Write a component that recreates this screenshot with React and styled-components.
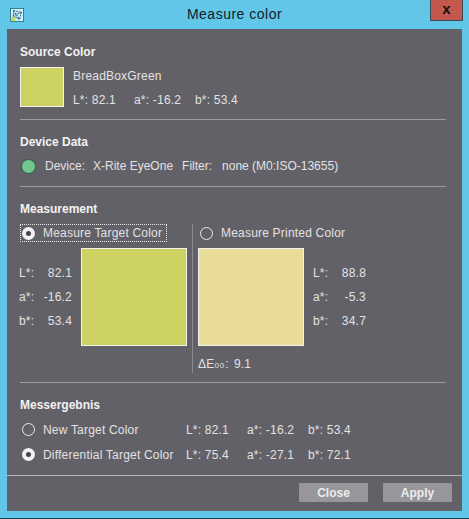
import styled, { createGlobalStyle } from "styled-components";

const GlobalStyle = createGlobalStyle`
  html, body {
    margin: 0;
    padding: 0;
    background: #62c6e8;
  }
  body {
    font-family: "Liberation Sans", Arial, sans-serif;
  }
`;

function Readout({ values }) {
  return (
    <LabRow>
      <span>L*: {values[0]}</span>
      <span>a*: {values[1]}</span>
      <span>b*: {values[2]}</span>
    </LabRow>
  );
}

function Radio({ checked }) {
  return <RadioCircle $checked={checked} />;
}

function LabColumn({ values }) {
  return (
    <LabStack>
      {["L*:", "a*:", "b*:"].map((label, i) => (
        <LabLine key={label}>
          <span>{label}</span>
          <span>{values[i]}</span>
        </LabLine>
      ))}
    </LabStack>
  );
}

export default function App() {
  return (
    <>
      <GlobalStyle />
      <Window>
        <TitleBar>
          <AppIcon viewBox="0 0 16 16">
            <rect x="0.5" y="0.5" width="15" height="15" fill="#d8eef2" stroke="#17788f" />
            <path d="M1 10h5v5H1z" fill="#c5d86a" />
            <path d="M4 3l9 2-2 8-7-4zM4 3l7 10M13 5L3 9" fill="none" stroke="#1c6f9a" strokeWidth="1.2" strokeDasharray="2 1" />
          </AppIcon>
          <Title>Measure color</Title>
          <CloseBox>x</CloseBox>
        </TitleBar>
        <Content>
          <Section $first>
            <Heading>Source Color</Heading>
            <SourceRow>
              <Swatch $color="#cdd263" $w={44} $h={40} />
              <SourceInfo>
                <span>BreadBoxGreen</span>
                <Readout values={["82.1", "-16.2", "53.4"]} />
              </SourceInfo>
            </SourceRow>
          </Section>
          <Divider />
          <Section>
            <Heading>Device Data</Heading>
            <DeviceRow>
              <StatusDot />
              <DeviceLabel>Device:</DeviceLabel>
              <span>X-Rite EyeOne</span>
              <FilterLabel>Filter:</FilterLabel>
              <span>none (M0:ISO-13655)</span>
            </DeviceRow>
          </Section>
          <Divider />
          <Section>
            <Heading>Measurement</Heading>
            <MeasureGrid>
              <MeasurePane>
                <FocusOption>
                  <Radio checked />
                  <span>Measure Target Color</span>
                </FocusOption>
                <TargetBody>
                  <LabColumn values={["82.1", "-16.2", "53.4"]} />
                  <Swatch $color="#cdd263" $w={106} $h={98} />
                </TargetBody>
              </MeasurePane>
              <PrintedPane>
                <PlainOption>
                  <Radio />
                  <span>Measure Printed Color</span>
                </PlainOption>
                <PrintedBody>
                  <Swatch $color="#e9dc97" $w={106} $h={98} />
                  <LabColumn values={["88.8", "-5.3", "34.7"]} />
                </PrintedBody>
                <DeltaRow>
                  <span>ΔE<Small>00</Small>:</span>
                  <span>9.1</span>
                </DeltaRow>
              </PrintedPane>
            </MeasureGrid>
          </Section>
          <Divider />
          <Section>
            <Heading>Messergebnis</Heading>
            <ResultGrid>
              <ResultOption>
                <Radio />
                <span>New Target Color</span>
              </ResultOption>
              <Readout values={["82.1", "-16.2", "53.4"]} />
              <ResultOption>
                <Radio checked />
                <span>Differential Target Color</span>
              </ResultOption>
              <Readout values={["75.4", "-27.1", "72.1"]} />
            </ResultGrid>
          </Section>
          <Footer>
            <DialogButton>Close</DialogButton>
            <DialogButton>Apply</DialogButton>
          </Footer>
        </Content>
      </Window>
    </>
  );
}

const Window = styled.div`
  width: 469px;
  height: 519px;
  box-sizing: border-box;
  background: #62c6e8;
  border-bottom: 1px solid #1d3c4c;
  display: flex;
  flex-direction: column;
  overflow: hidden;
`;

const TitleBar = styled.div`
  height: 29px;
  flex-shrink: 0;
  display: flex;
  align-items: flex-start;
  padding-left: 10px;
  padding-right: 6px;
`;

const AppIcon = styled.svg`
  width: 14px;
  height: 14px;
  margin-top: 8px;
  flex-shrink: 0;
`;

const Title = styled.div`
  flex: 1;
  text-align: center;
  font-size: 14px;
  letter-spacing: 0.5px;
  line-height: 29px;
  color: #10202a;
  padding-left: 15px;
`;

const CloseBox = styled.div`
  width: 33px;
  height: 21px;
  box-sizing: border-box;
  background: #c4584e;
  border: 1px solid #3c4a55;
  border-top: none;
  color: #111;
  font-size: 15px;
  font-weight: bold;
  line-height: 18px;
  text-align: center;
`;

const Content = styled.div`
  margin: 0 7px;
  height: 482px;
  box-sizing: border-box;
  background: #626168;
  color: #e2e2e2;
  font-size: 12px;
  letter-spacing: 0.2px;
  display: flex;
  flex-direction: column;
`;

const Section = styled.section`
  padding: ${(p) => (p.$first ? "15px" : "14px")} 13px 0;
`;

const Heading = styled.h2`
  margin: 1px 0 -1px;
  font-size: 12px;
  line-height: 15px;
  font-weight: bold;
  letter-spacing: 0;
  color: #f2f2f2;
`;

const Divider = styled.div`
  height: 1px;
  background: #9a9aa0;
  margin: 0 16px 0 13px;
`;

const SourceRow = styled.div`
  display: flex;
  gap: 9px;
  margin-top: 8px;
  margin-bottom: 11px;
`;

const Swatch = styled.div`
  width: ${(p) => p.$w}px;
  height: ${(p) => p.$h}px;
  box-sizing: border-box;
  flex-shrink: 0;
  background: ${(p) => p.$color};
  border: 1px solid #f2f2ee;
`;

const SourceInfo = styled.div`
  display: flex;
  flex-direction: column;
  gap: 8px;
  line-height: 16px;
  margin-top: 1px;
`;

const LabRow = styled.div`
  display: grid;
  grid-template-columns: 61px 61px auto;
  white-space: pre;
  line-height: 16px;
`;

const DeviceRow = styled.div`
  display: flex;
  align-items: center;
  height: 16px;
  margin-top: 9px;
  margin-bottom: 12px;
  letter-spacing: 0;
  padding-left: 1px;
`;

const StatusDot = styled.div`
  width: 15px;
  height: 15px;
  box-sizing: border-box;
  border-radius: 50%;
  background: #72c690;
  border: 1px solid #2e5a44;
  margin-right: 9px;
`;

const DeviceLabel = styled.span`
  margin-right: 8px;
`;

const FilterLabel = styled.span`
  margin: 0 10px 0 9px;
`;

const MeasureGrid = styled.div`
  display: grid;
  grid-template-columns: 172px 1fr;
  margin-top: 8px;
  margin-bottom: 9px;
`;

const MeasurePane = styled.div`
  display: flex;
  flex-direction: column;
`;

const PrintedPane = styled.div`
  display: flex;
  flex-direction: column;
  width: 206px;
  border-left: 1px solid #8b8b90;
`;

const FocusOption = styled.div`
  display: flex;
  align-items: center;
  gap: 8px;
  width: 147px;
  height: 18px;
  box-sizing: border-box;
  outline: 1px dotted #e8e8e8;
  outline-offset: -1px;
  padding-left: 2px;
  white-space: nowrap;
`;

const PlainOption = styled.div`
  display: flex;
  align-items: center;
  gap: 8px;
  height: 18px;
  padding-left: 7px;
  white-space: nowrap;
`;

const TargetBody = styled.div`
  display: flex;
  align-items: center;
  gap: 9px;
  margin-top: 6px;
  margin-left: -1px;
`;

const PrintedBody = styled.div`
  display: flex;
  align-items: center;
  gap: 9px;
  margin-top: 6px;
  padding-left: 5px;
`;

const LabStack = styled.div`
  display: flex;
  flex-direction: column;
  gap: 8px;
  width: 53px;
`;

const LabLine = styled.div`
  display: flex;
  justify-content: space-between;
  line-height: 16px;
`;

const DeltaRow = styled.div`
  display: flex;
  gap: 5px;
  align-items: center;
  box-sizing: border-box;
  height: 27px;
  padding: 8px 0 0 5px;
`;

const Small = styled.span`
  font-size: 8px;
  letter-spacing: 1px;
`;

const RadioCircle = styled.span`
  width: 13px;
  height: 13px;
  box-sizing: border-box;
  border-radius: 50%;
  flex-shrink: 0;
  border: ${(p) => (p.$checked ? "4px solid #f2f2f2" : "1px solid #ececec")};
  background: ${(p) => (p.$checked ? "#44434a" : "transparent")};
`;

const ResultGrid = styled.div`
  display: grid;
  grid-template-columns: 166px auto;
  grid-auto-rows: 25px;
  align-items: center;
  margin-top: 5px;
  margin-bottom: 8px;
`;

const ResultOption = styled.div`
  display: flex;
  align-items: center;
  gap: 8px;
  padding-left: 2px;
  white-space: nowrap;
`;

const Footer = styled.div`
  border-top: 1px solid #b4b4b8;
  display: flex;
  justify-content: flex-end;
  gap: 15px;
  padding: 7px 10px 0 0;
`;

const DialogButton = styled.button`
  width: 69px;
  height: 19px;
  padding: 0;
  border: none;
  background: #97979b;
  color: #ececec;
  font-family: "Liberation Sans", Arial, sans-serif;
  font-size: 12px;
  font-weight: bold;
`;
